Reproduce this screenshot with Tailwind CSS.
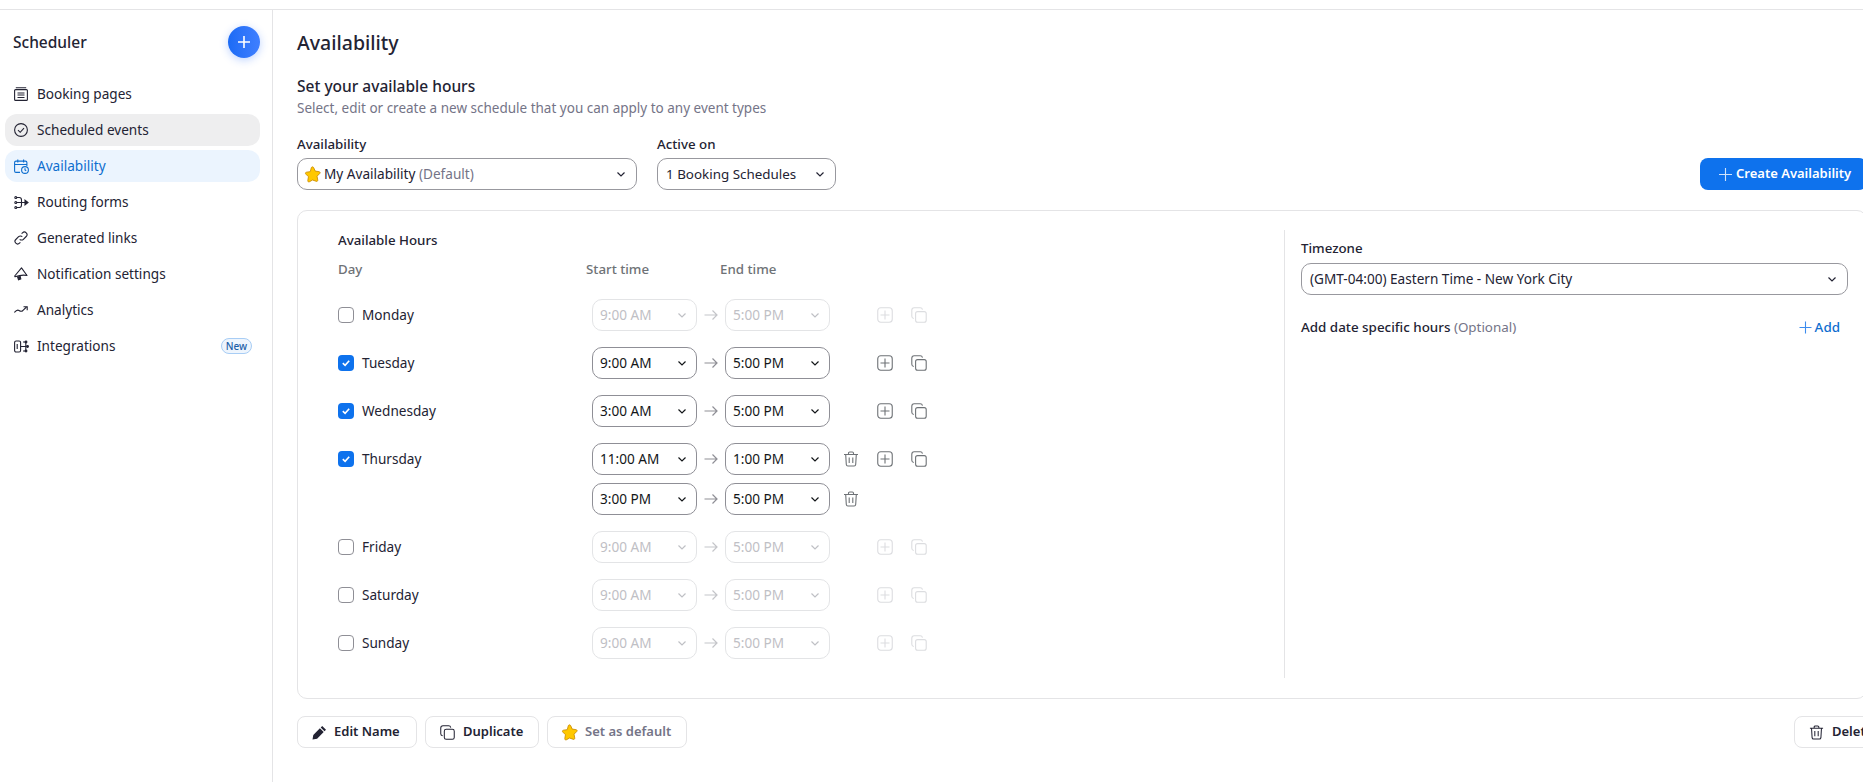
<!DOCTYPE html>
<html lang="en">
<head>
  <meta charset="UTF-8" />
  <title>Availability</title>
  <script src="https://cdn.jsdelivr.net/npm/@tailwindcss/browser@4"></script>
</head>
<body class="h-[782px] w-[1863px] overflow-hidden bg-white text-[#232333] font-['Noto_Sans',sans-serif]">

  <!-- Icon sprites -->
  <svg class="hidden">
    <symbol id="chev" viewBox="0 0 12 12"><path d="M2.5 4.5 6 8l3.5-3.5" fill="none" stroke="currentColor" stroke-width="1.2"/></symbol>
    <symbol id="arrow" viewBox="0 0 16 16"><path d="M1.5 8h12.5M9.5 3.5 14 8l-4.500 4.500" fill="none" stroke="currentColor" stroke-width="1.2"/></symbol>
    <symbol id="plusbox" viewBox="0 0 16 16"><rect x=".75" y=".75" width="14.5" height="14.5" rx="3" fill="none" stroke="currentColor" stroke-width="1.1"/><path d="M8 3.5v9M3.5 8h9" fill="none" stroke="currentColor" stroke-width="1.1"/></symbol>
    <symbol id="copy" viewBox="0 0 16 16"><rect x="4.6" y="4.6" width="10.6" height="10.6" rx="2" fill="none" stroke="currentColor" stroke-width="1.1"/><path d="M2.8 11.5C1.4 11.2.8 10.4.8 9.2V3.2C.8 1.7 1.7.8 3.2.8h6c1.2 0 2 .6 2.3 1.9" fill="none" stroke="currentColor" stroke-width="1.1"/></symbol>
    <symbol id="trash" viewBox="0 0 16 16"><path d="M1 3.5h14M5.5 3.5V2.2c0-.8.5-1.2 1.2-1.2h2.6c.7 0 1.2.4 1.2 1.2v1.3M2.7 3.5l.6 10c.1 1 .7 1.5 1.6 1.5h6.2c.9 0 1.5-.5 1.6-1.5l.6-10M6.2 6.5v5.5M9.8 6.5v5.5" fill="none" stroke="currentColor" stroke-width="1.1"/></symbol>
    <symbol id="star" viewBox="0 0 16 16"><path d="M8 .8c.5 0 .9.3 1.1.8l1.500 3.200 3.500.5c1.100.2 1.400 1 .7 1.800l-2.500 2.500.6 3.500c.2 1.100-.6 1.700-1.600 1.200L8 13.200l-2.800 1.600c-1 .5-1.800-.1-1.600-1.200l.6-3.500-2.500-2.500c-.7-.8-.4-1.600.7-1.800l3.500-.5L6.900 1.600C7.100 1.100 7.500.8 8 .8Z" fill="#ffc800" stroke="#c98a00" stroke-width=".8"/></symbol>
  </svg>

  <!-- Top line -->
  <div class="h-[10px] border-b border-[#e4e4e6]"></div>

  <div class="flex h-[772px]">

    <!-- Sidebar -->
    <aside class="w-[273px] shrink-0 border-r border-[#e4e4e6]">
      <div class="flex h-[48px] items-end justify-between pr-3 pl-[13px]">
        <h2 class="h-[32px] text-[15.500px] leading-[32px] font-medium">Scheduler</h2>
        <button class="flex size-8 items-center justify-center rounded-full bg-gradient-to-r from-[#1b6bf5] to-[#3f7fff] text-white shadow-[0_2px_8px_rgba(40,110,255,0.3)]">
          <svg class="size-4" viewBox="0 0 16 16"><path d="M8 2v12M2 8h12" fill="none" stroke="currentColor" stroke-width="1.6"/></svg>
        </button>
      </div>
      <nav class="mt-5 ml-[5px] flex w-[255px] flex-col gap-1 text-[13.600px]">
        <a class="flex h-8 items-center gap-[9px] rounded-xl pl-[9px]">
          <svg class="size-[14px] shrink-0" viewBox="0 0 14 14" fill="none" stroke="currentColor" stroke-width="1.1"><rect x=".6" y="2.600" width="12.800" height="10.800" rx="1"/><path d="M1.800.7h10.400M3.500 6h7M3.500 8h7M3.500 10.500h7"/></svg>
          Booking pages
        </a>
        <a class="flex h-8 items-center gap-[9px] rounded-xl bg-[#eeeeef] pl-[9px]">
          <svg class="size-[14px] shrink-0" viewBox="0 0 14 14" fill="none" stroke="currentColor" stroke-width="1.1"><circle cx="7" cy="7" r="6.400"/><path d="m4 7.200 2.200 2.100L10 5.200"/></svg>
          Scheduled events
        </a>
        <a class="flex h-8 items-center gap-[8px] rounded-xl bg-[#ebf4fe] pl-[9px] text-[#0e6ecf]">
          <svg class="size-[15px] shrink-0" viewBox="0 0 15 15" fill="none" stroke="currentColor" stroke-width="1.1"><path d="M6 13.400H2C1.100 13.400.6 12.900.6 12V3.500C.6 2.600 1.100 2.100 2 2.100h9.500c.9 0 1.400.5 1.400 1.400V7M.6 5.500h12.300M3.800.4v3M9.600.4v3"/><circle cx="11" cy="11" r="3.400"/><path d="M11 9.300V11l1.200.7"/></svg>
          Availability
        </a>
        <a class="flex h-8 items-center gap-[8px] rounded-xl pl-[9px]">
          <svg class="size-[15px] shrink-0" viewBox="0 0 15 15" fill="none" stroke="currentColor" stroke-width="1.1"><circle cx="1.800" cy="2.500" r="1"/><circle cx="1.800" cy="7.500" r="1"/><circle cx="1.800" cy="12.500" r="1"/><path d="M2.800 2.500h2.500C7 2.500 7.500 3.500 7.500 5v5c0 1.500-.5 2.500-2.200 2.500H2.800M2.800 7.500h9"/><path d="M11 5.200 14 7.500l-3 2.300Z" fill="currentColor"/></svg>
          Routing forms
        </a>
        <a class="flex h-8 items-center gap-[9px] rounded-xl pl-[9px]">
          <svg class="size-[14px] shrink-0" viewBox="0 0 14 14" fill="none" stroke="currentColor" stroke-width="1.1"><path d="M5.700 8.300a2.600 2.600 0 0 0 3.700 0l2.800-2.800a2.600 2.600 0 0 0-3.700-3.700l-.9.9"/><path d="M8.300 5.700a2.600 2.600 0 0 0-3.700 0L1.800 8.500a2.600 2.600 0 0 0 3.700 3.700l.9-.9"/></svg>
          Generated links
        </a>
        <a class="flex h-8 items-center gap-[9px] rounded-xl pl-[9px]">
          <svg class="size-[14px] shrink-0" viewBox="0 0 14 14" fill="none" stroke="currentColor" stroke-width="1.1"><path d="M7.500.9 13 8.500c-3-.6-7.500-.3-12 1.300L.7 9 7.500.9Z" stroke-linejoin="round"/><path d="m3.500 9.500 1 3.300 2.300-.8-.7-3" fill="currentColor"/></svg>
          Notification settings
        </a>
        <a class="flex h-8 items-center gap-[9px] rounded-xl pl-[9px]">
          <svg class="size-[14px] shrink-0" viewBox="0 0 14 14" fill="none" stroke="currentColor" stroke-width="1.1"><path d="M.4 9.500C2 7.500 3.500 6.500 5 7.500s2.800 1.300 4-.2L12.500 4"/><path d="M9.500 3.700h3.700v3.500"/></svg>
          Analytics
        </a>
        <a class="flex h-8 items-center gap-[8px] rounded-xl pr-2 pl-[9px]">
          <svg class="size-[15px] shrink-0" viewBox="0 0 15 15" fill="none" stroke="currentColor" stroke-width="1.1"><rect x=".6" y="2" width="6" height="11" rx="1.500"/><path d="M3.200 5v5M6.600 7.500h6M9 3h2c.5 0 .8.300.8.800v7.400c0 .5-.3.800-.8.800H9"/><circle cx="12" cy="3" r=".9" fill="currentColor"/><circle cx="13.500" cy="7.500" r=".9" fill="currentColor"/><circle cx="12" cy="12" r=".9" fill="currentColor"/></svg>
          Integrations
          <span class="ml-auto flex h-4 w-[31px] items-center justify-center rounded-full border border-[#a8cdf5] bg-[#eef5fd] text-[10px] font-medium text-[#1c5fa8]">New</span>
        </a>
      </nav>
    </aside>

    <!-- Main Content -->
    <main class="w-[1594px] shrink-0 pl-6">
      <h1 class="mt-[19px] h-7 text-[19.500px] leading-7 font-medium">Availability</h1>
      <h3 class="mt-[18px] h-[22px] text-[15.500px] leading-[22px] font-medium">Set your available hours</h3>
      <p class="mt-px h-5 text-[13.500px] leading-5 text-[#747487]">Select, edit or create a new schedule that you can apply to any event types</p>

      <div class="mt-4 flex w-[1570px] items-end">
        <div class="w-[340px]">
          <label class="block h-5 text-[13.300px] leading-5 font-medium">Availability</label>
          <div class="mt-1 flex h-8 items-center rounded-[10px] border border-[#98989e] pr-[9px] pl-[6px] text-[13.600px]">
            <svg class="mr-[3px] size-[17px]"><use href="#star"/></svg>
            My Availability&nbsp;<span class="text-[#747487]">(Default)</span>
            <svg class="ml-auto size-3"><use href="#chev"/></svg>
          </div>
        </div>
        <div class="ml-5 w-[179px]">
          <label class="block h-5 text-[13.300px] leading-5 font-medium">Active on</label>
          <div class="mt-1 flex h-8 items-center rounded-[10px] border border-[#98989e] pr-[9px] pl-2 text-[13.400px]">
            1 Booking Schedules
            <svg class="ml-auto size-3"><use href="#chev"/></svg>
          </div>
        </div>
        <button class="ml-auto flex h-8 w-[167px] items-center gap-[3px] rounded-lg bg-[#0e72ed] pl-[18px] text-[13px] font-semibold text-white">
          <svg class="size-[15px] text-[#cfe3fb]" viewBox="0 0 15 15"><path d="M7.500 1v13M1 7.500h13" fill="none" stroke="currentColor" stroke-width="1.100"/></svg>
          Create Availability
        </button>
      </div>

      <!-- Hours card -->
      <section class="mt-5 flex h-[489px] w-[1570px] rounded-[10px] border border-[#e4e4e6] pt-[19px] pr-[18px] pb-5 pl-10">
        <div class="flex-1">
          <h4 class="h-5 text-[13.300px] leading-5 font-medium">Available Hours</h4>
          <div class="mt-[9px] flex h-5 text-[13.300px] leading-5 font-medium text-[#6e7276]">
            <span class="w-[248px]">Day</span>
            <span class="w-[134px]">Start time</span>
            <span>End time</span>
          </div>

          <div class="mt-5 flex flex-col gap-4 text-[13.600px]">
            <!-- Monday -->
            <div class="flex h-8 items-center">
              <span class="size-4 rounded-[4px] border border-[#8f8f96]"></span>
              <span class="ml-2 w-[230px]">Monday</span>
              <div class="flex h-8 w-[105px] items-center rounded-[10px] border border-[#e3e4e6] pr-2 pl-[7px] text-[#bfc0c5]">9:00 AM<svg class="ml-auto size-3"><use href="#chev"/></svg></div>
              <svg class="mx-[6px] size-4 text-[#c4c5c9]"><use href="#arrow"/></svg>
              <div class="flex h-8 w-[105px] items-center rounded-[10px] border border-[#e3e4e6] pr-2 pl-[7px] text-[#bfc0c5]">5:00 PM<svg class="ml-auto size-3"><use href="#chev"/></svg></div>
              <div class="ml-[38px] flex w-[34px] justify-center text-[#dcdde0]"><svg class="size-4"><use href="#plusbox"/></svg></div>
              <div class="flex w-[33px] justify-center text-[#dcdde0]"><svg class="size-4"><use href="#copy"/></svg></div>
            </div>
            <!-- Tuesday -->
            <div class="flex h-8 items-center">
              <span class="flex size-4 items-center justify-center rounded-[4px] bg-[#0e72ed] text-white"><svg class="size-3" viewBox="0 0 12 12"><path d="m2.800 6.200 2.300 2.200 4.100-4.600" fill="none" stroke="currentColor" stroke-width="1.600"/></svg></span>
              <span class="ml-2 w-[230px]">Tuesday</span>
              <div class="flex h-8 w-[105px] items-center rounded-[10px] border border-[#8f8f96] pr-2 pl-[7px] text-[#131619]">9:00 AM<svg class="ml-auto size-3"><use href="#chev"/></svg></div>
              <svg class="mx-[6px] size-4 text-[#8f8f96]"><use href="#arrow"/></svg>
              <div class="flex h-8 w-[105px] items-center rounded-[10px] border border-[#8f8f96] pr-2 pl-[7px] text-[#131619]">5:00 PM<svg class="ml-auto size-3"><use href="#chev"/></svg></div>
              <div class="ml-[38px] flex w-[34px] justify-center text-[#6e7276]"><svg class="size-4"><use href="#plusbox"/></svg></div>
              <div class="flex w-[33px] justify-center text-[#6e7276]"><svg class="size-4"><use href="#copy"/></svg></div>
            </div>
            <!-- Wednesday -->
            <div class="flex h-8 items-center">
              <span class="flex size-4 items-center justify-center rounded-[4px] bg-[#0e72ed] text-white"><svg class="size-3" viewBox="0 0 12 12"><path d="m2.800 6.200 2.300 2.200 4.100-4.600" fill="none" stroke="currentColor" stroke-width="1.600"/></svg></span>
              <span class="ml-2 w-[230px]">Wednesday</span>
              <div class="flex h-8 w-[105px] items-center rounded-[10px] border border-[#8f8f96] pr-2 pl-[7px] text-[#131619]">3:00 AM<svg class="ml-auto size-3"><use href="#chev"/></svg></div>
              <svg class="mx-[6px] size-4 text-[#8f8f96]"><use href="#arrow"/></svg>
              <div class="flex h-8 w-[105px] items-center rounded-[10px] border border-[#8f8f96] pr-2 pl-[7px] text-[#131619]">5:00 PM<svg class="ml-auto size-3"><use href="#chev"/></svg></div>
              <div class="ml-[38px] flex w-[34px] justify-center text-[#6e7276]"><svg class="size-4"><use href="#plusbox"/></svg></div>
              <div class="flex w-[33px] justify-center text-[#6e7276]"><svg class="size-4"><use href="#copy"/></svg></div>
            </div>
            <!-- Thursday, two ranges -->
            <div class="flex flex-col gap-2">
              <div class="flex h-8 items-center">
                <span class="flex size-4 items-center justify-center rounded-[4px] bg-[#0e72ed] text-white"><svg class="size-3" viewBox="0 0 12 12"><path d="m2.800 6.200 2.300 2.200 4.100-4.600" fill="none" stroke="currentColor" stroke-width="1.600"/></svg></span>
                <span class="ml-2 w-[230px]">Thursday</span>
                <div class="flex h-8 w-[105px] items-center rounded-[10px] border border-[#8f8f96] pr-2 pl-[7px] text-[#131619]">11:00 AM<svg class="ml-auto size-3"><use href="#chev"/></svg></div>
                <svg class="mx-[6px] size-4 text-[#8f8f96]"><use href="#arrow"/></svg>
                <div class="flex h-8 w-[105px] items-center rounded-[10px] border border-[#8f8f96] pr-2 pl-[7px] text-[#131619]">1:00 PM<svg class="ml-auto size-3"><use href="#chev"/></svg></div>
                <div class="ml-1 flex w-[34px] justify-center text-[#6e7276]"><svg class="size-4"><use href="#trash"/></svg></div>
                <div class="flex w-[34px] justify-center text-[#6e7276]"><svg class="size-4"><use href="#plusbox"/></svg></div>
                <div class="flex w-[33px] justify-center text-[#6e7276]"><svg class="size-4"><use href="#copy"/></svg></div>
              </div>
              <div class="flex h-8 items-center pl-[254px]">
                <div class="flex h-8 w-[105px] items-center rounded-[10px] border border-[#8f8f96] pr-2 pl-[7px] text-[#131619]">3:00 PM<svg class="ml-auto size-3"><use href="#chev"/></svg></div>
                <svg class="mx-[6px] size-4 text-[#8f8f96]"><use href="#arrow"/></svg>
                <div class="flex h-8 w-[105px] items-center rounded-[10px] border border-[#8f8f96] pr-2 pl-[7px] text-[#131619]">5:00 PM<svg class="ml-auto size-3"><use href="#chev"/></svg></div>
                <div class="ml-1 flex w-[34px] justify-center text-[#6e7276]"><svg class="size-4"><use href="#trash"/></svg></div>
              </div>
            </div>
            <!-- Friday -->
            <div class="flex h-8 items-center">
              <span class="size-4 rounded-[4px] border border-[#8f8f96]"></span>
              <span class="ml-2 w-[230px]">Friday</span>
              <div class="flex h-8 w-[105px] items-center rounded-[10px] border border-[#e3e4e6] pr-2 pl-[7px] text-[#bfc0c5]">9:00 AM<svg class="ml-auto size-3"><use href="#chev"/></svg></div>
              <svg class="mx-[6px] size-4 text-[#c4c5c9]"><use href="#arrow"/></svg>
              <div class="flex h-8 w-[105px] items-center rounded-[10px] border border-[#e3e4e6] pr-2 pl-[7px] text-[#bfc0c5]">5:00 PM<svg class="ml-auto size-3"><use href="#chev"/></svg></div>
              <div class="ml-[38px] flex w-[34px] justify-center text-[#dcdde0]"><svg class="size-4"><use href="#plusbox"/></svg></div>
              <div class="flex w-[33px] justify-center text-[#dcdde0]"><svg class="size-4"><use href="#copy"/></svg></div>
            </div>
            <!-- Saturday -->
            <div class="flex h-8 items-center">
              <span class="size-4 rounded-[4px] border border-[#8f8f96]"></span>
              <span class="ml-2 w-[230px]">Saturday</span>
              <div class="flex h-8 w-[105px] items-center rounded-[10px] border border-[#e3e4e6] pr-2 pl-[7px] text-[#bfc0c5]">9:00 AM<svg class="ml-auto size-3"><use href="#chev"/></svg></div>
              <svg class="mx-[6px] size-4 text-[#c4c5c9]"><use href="#arrow"/></svg>
              <div class="flex h-8 w-[105px] items-center rounded-[10px] border border-[#e3e4e6] pr-2 pl-[7px] text-[#bfc0c5]">5:00 PM<svg class="ml-auto size-3"><use href="#chev"/></svg></div>
              <div class="ml-[38px] flex w-[34px] justify-center text-[#dcdde0]"><svg class="size-4"><use href="#plusbox"/></svg></div>
              <div class="flex w-[33px] justify-center text-[#dcdde0]"><svg class="size-4"><use href="#copy"/></svg></div>
            </div>
            <!-- Sunday -->
            <div class="flex h-8 items-center">
              <span class="size-4 rounded-[4px] border border-[#8f8f96]"></span>
              <span class="ml-2 w-[230px]">Sunday</span>
              <div class="flex h-8 w-[105px] items-center rounded-[10px] border border-[#e3e4e6] pr-2 pl-[7px] text-[#bfc0c5]">9:00 AM<svg class="ml-auto size-3"><use href="#chev"/></svg></div>
              <svg class="mx-[6px] size-4 text-[#c4c5c9]"><use href="#arrow"/></svg>
              <div class="flex h-8 w-[105px] items-center rounded-[10px] border border-[#e3e4e6] pr-2 pl-[7px] text-[#bfc0c5]">5:00 PM<svg class="ml-auto size-3"><use href="#chev"/></svg></div>
              <div class="ml-[38px] flex w-[34px] justify-center text-[#dcdde0]"><svg class="size-4"><use href="#plusbox"/></svg></div>
              <div class="flex w-[33px] justify-center text-[#dcdde0]"><svg class="size-4"><use href="#copy"/></svg></div>
            </div>
          </div>
        </div>

        <!-- Timezone panel -->
        <div class="w-[564px] border-l border-[#e4e4e6] pt-2 pl-4">
          <label class="block h-5 text-[13.300px] leading-5 font-medium">Timezone</label>
          <div class="mt-[5px] flex h-8 items-center rounded-[10px] border border-[#98989e] pr-[9px] pl-2 text-[13.600px]">
            (GMT-04:00) Eastern Time - New York City
            <svg class="ml-auto size-3"><use href="#chev"/></svg>
          </div>
          <div class="mt-[22px] flex h-5 items-center pr-2 text-[13.400px]">
            <span class="font-medium">Add date specific hours</span>&nbsp;<span class="text-[#747487]">(Optional)</span>
            <a class="ml-auto flex items-center gap-[3px] font-medium text-[#0e6ecf]">
              <svg class="size-[13px] text-[#3c8cee]" viewBox="0 0 13 13"><path d="M6.500.5v12M.5 6.500h12" fill="none" stroke="currentColor" stroke-width="1.100"/></svg>
              Add
            </a>
          </div>
        </div>
      </section>

      <!-- Bottom actions -->
      <div class="mt-[17px] flex w-[1597px] text-[13px] font-semibold">
        <button class="flex h-8 w-[120px] items-center gap-[7px] rounded-lg border border-[#e4e4e6] pl-[14px]">
          <svg class="size-[15px]" viewBox="0 0 15 15"><path d="M10.200 1 14 4.800l-1.500 1.500-3.800-3.800L10.200 1ZM7.900 3.300l3.800 3.800-6.600 6.600-4.600.8.800-4.600 6.600-6.600Z" fill="#232333"/></svg>
          Edit Name
        </button>
        <button class="ml-2 flex h-8 w-[114px] items-center gap-[8px] rounded-lg border border-[#e4e4e6] pl-[14px]">
          <svg class="size-[15px]"><use href="#copy"/></svg>
          Duplicate
        </button>
        <button class="ml-2 flex h-8 w-[140px] items-center gap-[7px] rounded-lg border border-[#e4e4e6] pl-[13px] text-[#747487]">
          <svg class="size-[17px]"><use href="#star"/></svg>
          Set as default
        </button>
        <button class="ml-auto flex h-8 w-[100px] items-center gap-[8px] rounded-lg border border-[#e4e4e6] pl-[14px]">
          <svg class="size-[15px]"><use href="#trash"/></svg>
          Delete
        </button>
      </div>
    </main>
  </div>
</body>
</html>
